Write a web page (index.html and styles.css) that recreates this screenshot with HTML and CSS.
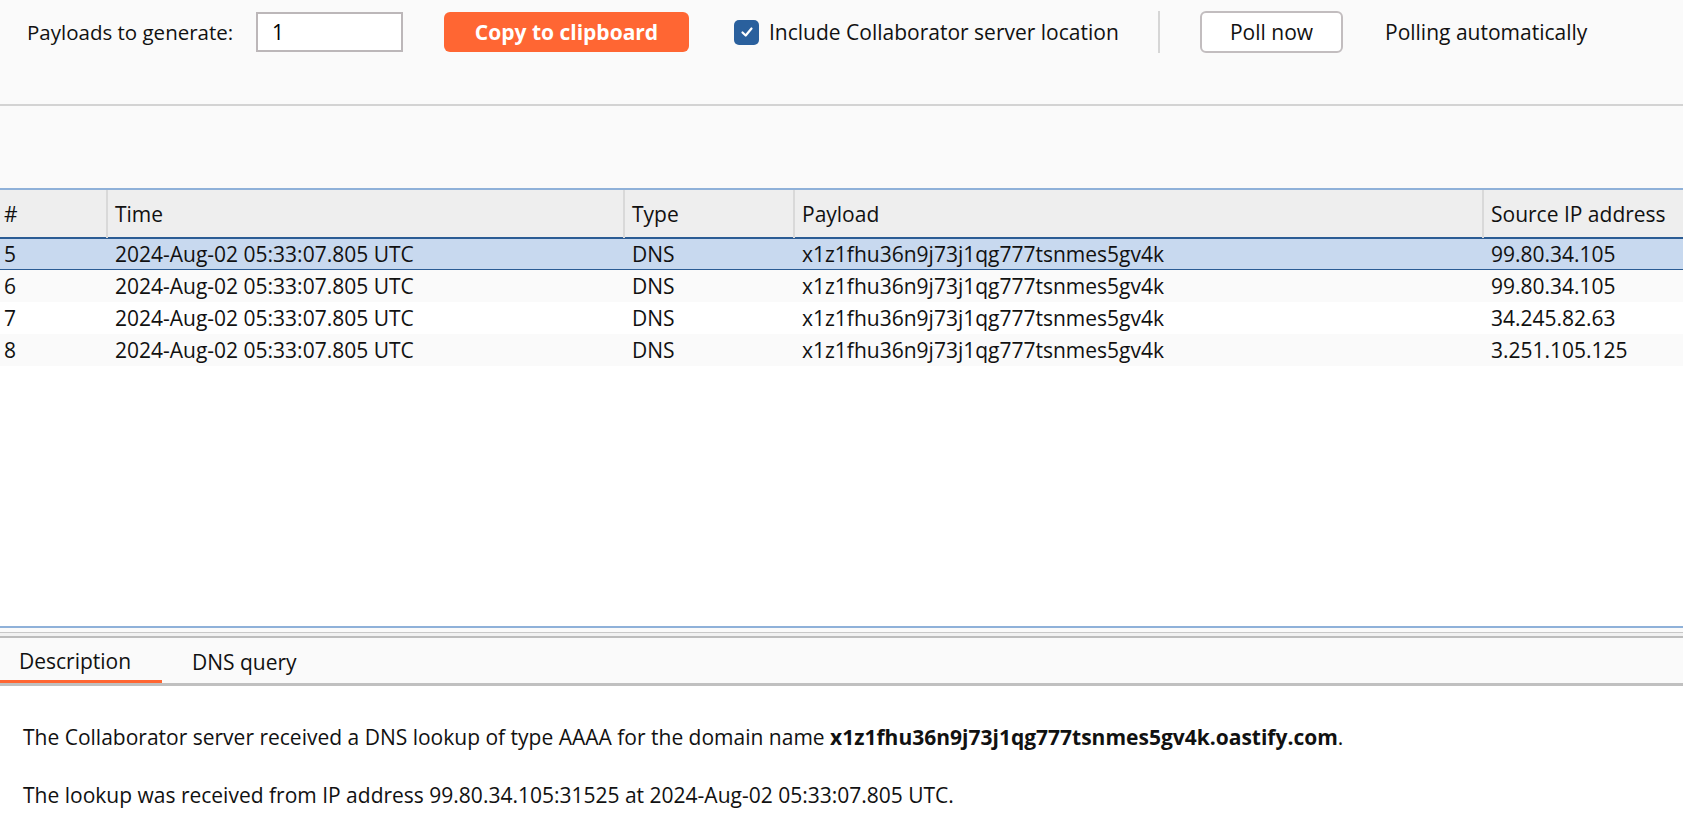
FILE: index.html
```html
<!DOCTYPE html>
<html lang="en">
<head>
<meta charset="utf-8">
<title>Collaborator</title>
<link rel="stylesheet" href="styles.css">
</head>
<body>
<div class="app">
  <header class="toolbar">
    <span class="field-label">Payloads to generate:</span>
    <input class="num-input" type="text" value="1">
    <button class="copy-btn">Copy to clipboard</button>
    <label class="check">
      <span class="check-box">
        <svg width="16" height="16" viewBox="0 0 16 16"><path d="M3.5 8.5 L6.7 11.5 L12.5 4.5" fill="none" stroke="#fff" stroke-width="2.2" stroke-linecap="round" stroke-linejoin="round"/></svg>
      </span>
      <span class="check-text">Include Collaborator server location</span>
    </label>
    <span class="vsep"></span>
    <button class="poll-btn">Poll now</button>
    <span class="status">Polling automatically</span>
  </header>

  <div class="filter-area"></div>

  <section class="table-pane">
    <div class="row head">
      <div class="cell c-num">#</div>
      <div class="cell">Time</div>
      <div class="cell">Type</div>
      <div class="cell">Payload</div>
      <div class="cell">Source IP address</div>
    </div>
    <div class="row selected">
      <div class="cell c-num">5</div>
      <div class="cell">2024-Aug-02 05:33:07.805 UTC</div>
      <div class="cell">DNS</div>
      <div class="cell">x1z1fhu36n9j73j1qg777tsnmes5gv4k</div>
      <div class="cell">99.80.34.105</div>
    </div>
    <div class="row alt">
      <div class="cell c-num">6</div>
      <div class="cell">2024-Aug-02 05:33:07.805 UTC</div>
      <div class="cell">DNS</div>
      <div class="cell">x1z1fhu36n9j73j1qg777tsnmes5gv4k</div>
      <div class="cell">99.80.34.105</div>
    </div>
    <div class="row">
      <div class="cell c-num">7</div>
      <div class="cell">2024-Aug-02 05:33:07.805 UTC</div>
      <div class="cell">DNS</div>
      <div class="cell">x1z1fhu36n9j73j1qg777tsnmes5gv4k</div>
      <div class="cell">34.245.82.63</div>
    </div>
    <div class="row alt">
      <div class="cell c-num">8</div>
      <div class="cell">2024-Aug-02 05:33:07.805 UTC</div>
      <div class="cell">DNS</div>
      <div class="cell">x1z1fhu36n9j73j1qg777tsnmes5gv4k</div>
      <div class="cell">3.251.105.125</div>
    </div>
  </section>

  <div class="splitter"></div>

  <nav class="tabs">
    <span class="tab active">Description</span>
    <span class="tab">DNS query</span>
  </nav>

  <section class="desc">
    <p>The Collaborator server received a DNS lookup of type AAAA for the domain name <b>x1z1fhu36n9j73j1qg777tsnmes5gv4k.oastify.com</b>.</p>
    <p>The lookup was received from IP address 99.80.34.105:31525 at 2024-Aug-02 05:33:07.805 UTC.</p>
  </section>
</div>
</body>
</html>
```

FILE: styles.css
```css
* { box-sizing: border-box; }

html, body {
  margin: 0;
  padding: 0;
  height: 100%;
}

body {
  font-family: "Open Sans", "Noto Sans", "Liberation Sans", sans-serif;
  font-size: 21px;
  color: #111;
  background: #fafafa;
  overflow: hidden;
}

.app {
  display: flex;
  flex-direction: column;
  height: 822px;
}

/* ---------- toolbar ---------- */
.toolbar {
  height: 106px;
  flex: none;
  display: flex;
  align-items: flex-start;
  padding: 12px 0 0 27px;
  background: #fafafa;
  border-bottom: 2px solid #d3d3d3;
}

.field-label {
  width: 207px;
  height: 40px;
  line-height: 40px;
  font-size: 20.5px;
  white-space: nowrap;
}

.num-input {
  margin-left: 22px;
  width: 147px;
  height: 40px;
  border: 2px solid #bcb7b9;
  background: #fff;
  font: inherit;
  padding: 0 0 0 14px;
  color: #000;
  outline: none;
}

.copy-btn {
  margin-left: 41px;
  width: 245px;
  height: 40px;
  border: none;
  border-radius: 6px;
  background: #ff6633;
  color: #fff;
  font: inherit;
  font-weight: 700;
  font-size: 21px;
  padding: 0;
}

.check {
  margin-left: 45px;
  display: flex;
  align-items: center;
  height: 40px;
  width: 379px;
}

.check-box {
  width: 25px;
  height: 25px;
  border-radius: 5px;
  background: #2a609d;
  display: flex;
  align-items: center;
  justify-content: center;
  flex: none;
}

.check-text {
  margin-left: 10px;
  white-space: nowrap;
}

.vsep {
  margin-left: 45px;
  margin-top: -1px;
  width: 2px;
  height: 42px;
  background: #d6d6d6;
}

.poll-btn {
  margin-left: 40px;
  margin-top: -1px;
  width: 143px;
  height: 42px;
  border: 2px solid #c2bdbf;
  border-radius: 6px;
  background: #fff;
  font: inherit;
  color: #111;
  padding: 0;
}

.status {
  margin-left: 42px;
  height: 40px;
  line-height: 40px;
  white-space: nowrap;
}

/* ---------- empty filter area ---------- */
.filter-area {
  height: 82px;
  flex: none;
  background: #fafafa;
}

/* ---------- table ---------- */
.table-pane {
  height: 438px;
  flex: none;
  background: #fff;
  border-top: 2px solid #8fb1d9;
}

.row {
  display: grid;
  grid-template-columns: 106px 517px 170px 689px 1fr;
  height: 32px;
  align-items: center;
  white-space: nowrap;
}

.row.head {
  height: 48px;
  background: #eeeeee;
  align-items: stretch;
}

.row.head .cell {
  display: flex;
  align-items: center;
  border-left: 2px solid #d9d9d9;
  padding-left: 7px;
}

.row.head .cell.c-num {
  border-left: none;
  padding-left: 4px;
}

.cell {
  padding-left: 9px;
  overflow: hidden;
}

.cell.c-num { padding-left: 4px; }

.row.alt { background: #fafafa; }

.row.selected {
  background: #c8d9ef;
  border-top: 2px solid #2b5c94;
  border-bottom: 2px solid #2b5c94;
  height: 34px;
  margin-top: -1px;
  margin-bottom: -1px;
}

/* ---------- splitter ---------- */
.splitter {
  height: 12px;
  flex: none;
  background: #f2f2f2;
  border-top: 2px solid #8fb1d9;
  border-bottom: 2px solid #bdbdbd;
  box-shadow: inset 0 4px 0 #fafafa, inset 0 5px 0 #c8c8c8;
}

/* ---------- tabs ---------- */
.tabs {
  height: 48px;
  flex: none;
  display: flex;
  background: #fafafa;
  border-bottom: 3px solid #c0c0c0;
}

.tab {
  display: flex;
  align-items: center;
  padding-left: 30px;
  padding-right: 30px;
  padding-top: 3px;
  height: 45px;
}

.tab.active {
  width: 162px;
  padding-left: 19px;
  border-bottom: 3px solid #ff6633;
}

/* ---------- description ---------- */
.desc {
  flex: 1;
  background: #fff;
  padding: 38px 0 0 23px;
}

.desc p {
  margin: 0 0 32px 0;
  line-height: 26px;
}

.desc b { font-weight: 700; }
```
